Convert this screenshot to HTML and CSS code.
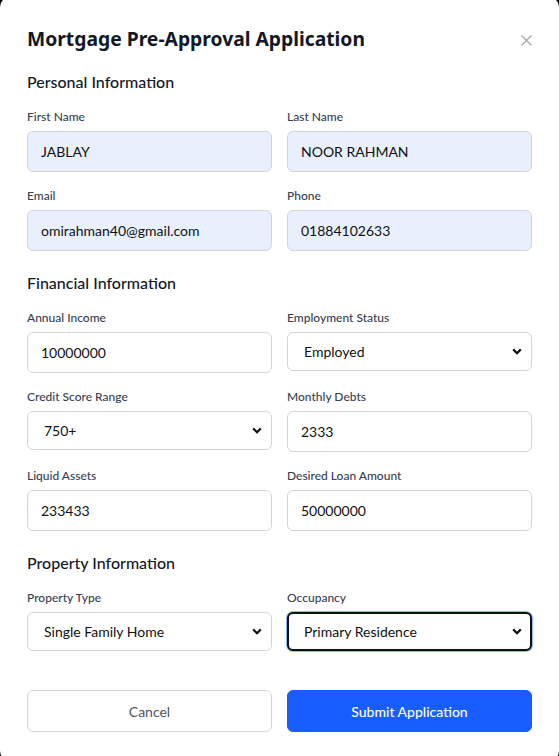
FILE: index.html
```html
<!DOCTYPE html>
<html lang="en">
<head>
<meta charset="utf-8">
<title>Mortgage Pre-Approval Application</title>
<link rel="stylesheet" href="styles.css">
</head>
<body>
<div class="modal">
  <div class="modal-header">
    <h1 class="title">Mortgage Pre-Approval Application</h1>
    <button class="close" aria-label="Close">
      <svg width="11" height="11" viewBox="0 0 11 11"><path d="M0.5 0.5L10.5 10.5M10.5 0.5L0.5 10.5" stroke="#9ca3af" stroke-width="1.1" fill="none"/></svg>
    </button>
  </div>

  <section class="section">
    <h2 class="section-title">Personal Information</h2>
    <div class="grid">
      <div class="field"><label class="label">First Name</label><input class="control filled" value="JABLAY"></div>
      <div class="field"><label class="label">Last Name</label><input class="control filled" value="NOOR RAHMAN"></div>
      <div class="field"><label class="label">Email</label><input class="control filled" value="omirahman40@gmail.com"></div>
      <div class="field"><label class="label">Phone</label><input class="control filled" value="01884102633"></div>
    </div>
  </section>

  <section class="section">
    <h2 class="section-title">Financial Information</h2>
    <div class="grid">
      <div class="field"><label class="label">Annual Income</label><input class="control" value="10000000"></div>
      <div class="field"><label class="label">Employment Status</label><select class="control select"><option>Employed</option></select></div>
      <div class="field"><label class="label">Credit Score Range</label><select class="control select"><option>750+</option></select></div>
      <div class="field"><label class="label">Monthly Debts</label><input class="control" value="2333"></div>
      <div class="field"><label class="label">Liquid Assets</label><input class="control" value="233433"></div>
      <div class="field"><label class="label">Desired Loan Amount</label><input class="control" value="50000000"></div>
    </div>
  </section>

  <section class="section">
    <h2 class="section-title">Property Information</h2>
    <div class="grid">
      <div class="field"><label class="label">Property Type</label><select class="control select"><option>Single Family Home</option></select></div>
      <div class="field"><label class="label">Occupancy</label><select class="control select focused"><option>Primary Residence</option></select></div>
    </div>
  </section>

  <div class="actions">
    <button class="btn btn-cancel">Cancel</button>
    <button class="btn btn-submit">Submit Application</button>
  </div>
</div>
</body>
</html>
```

FILE: styles.css
```css
* { box-sizing: border-box; }
html, body { margin: 0; padding: 0; background: #000; overflow: hidden; }
body { font-family: Lato, "Noto Sans", Arial, sans-serif; color: #111827; }

.modal {
  background: #fff;
  border-radius: 10px;
  margin-top: -3px;
  height: 764px;
  padding: 28px 27px 0 27px;
}

.modal-header {
  display: flex;
  justify-content: space-between;
  align-items: center;
  height: 28px;
}
.title {
  margin: 0;
  font-family: "Noto Sans", Lato, sans-serif;
  font-size: 19.3px;
  line-height: 28px;
  font-weight: 700;
  color: #111827;
}
.close {
  border: 0;
  background: none;
  padding: 0;
  width: 11px;
  height: 11px;
  display: flex;
  margin-top: 2px;
}

.section { margin-top: 17px; }
.section + .section { margin-top: 20px; }
.section-title {
  margin: 0 0 15px 0;
  font-size: 16px;
  line-height: 24px;
  font-weight: 500;
  color: #111827;
}

.grid {
  display: grid;
  grid-template-columns: 1fr 1fr;
  column-gap: 15px;
  row-gap: 16px;
  align-items: start;
}
.field { display: flex; flex-direction: column; }
.label {
  font-size: 12px;
  line-height: 16px;
  font-weight: 500;
  color: #374151;
  margin-bottom: 6px;
}
.control {
  font-family: inherit;
  font-size: 14px;
  color: #111;
  height: 41px;
  padding: 0 13px;
  border: 1px solid #d1d5db;
  border-radius: 6px;
  background: #fff;
  outline: none;
  width: 100%;
}
.control.filled { background: #e8f0fe; }
.select {
  -webkit-appearance: none;
  appearance: none;
  height: 39px;
  padding-left: 16px;
  background-image: url("data:image/svg+xml;utf8,<svg xmlns='http://www.w3.org/2000/svg' width='10' height='7' viewBox='0 0 10 7'><path d='M1.2 1.4L5 5.2L8.8 1.4' stroke='%23111' stroke-width='2.2' fill='none'/></svg>");
  background-repeat: no-repeat;
  background-position: right 9px center;
}
.select.focused {
  border: 2px solid #111;
  padding-left: 15px;
  box-shadow: 0 0 0 1px #8fb5f5;
  background-position: right 8px center;
}

.actions {
  display: grid;
  grid-template-columns: 1fr 1fr;
  column-gap: 15px;
  margin-top: 39px;
}
.btn {
  font-family: inherit;
  font-size: 14px;
  height: 42px;
  border-radius: 6px;
  cursor: pointer;
}
.btn-cancel {
  background: #fff;
  border: 1px solid #d1d5db;
  color: #4b5563;
}
.btn-submit {
  background: #175dff;
  border: 1px solid #175dff;
  color: #fff;
  font-weight: 500;
}
```
